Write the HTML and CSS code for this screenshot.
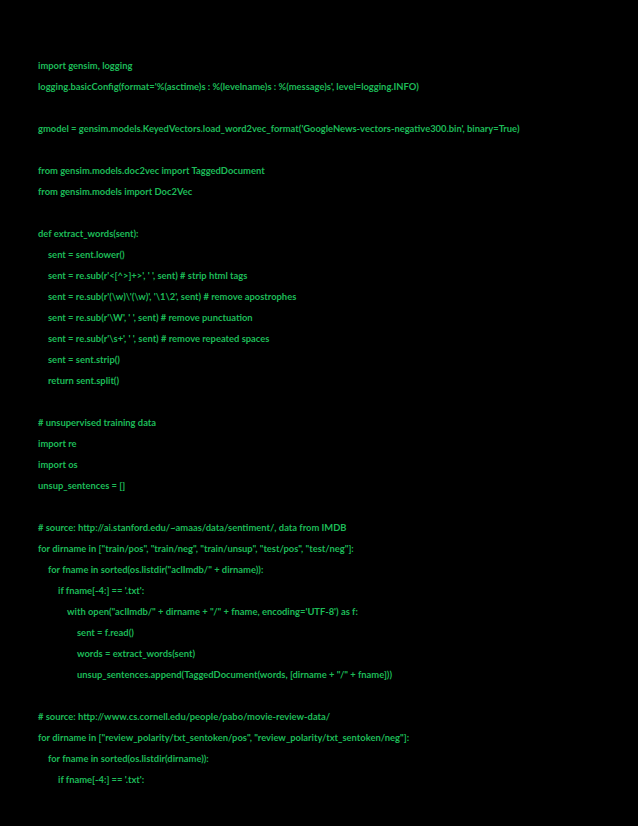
FILE: index.html
```html
<!DOCTYPE html>
<html>
<head>
<meta charset="utf-8">
<link rel="stylesheet" href="styles.css">
</head>
<body>
<div class="code">
<div class="ln">import gensim, logging</div>
<div class="ln">logging.basicConfig(format='%(asctime)s : %(levelname)s : %(message)s', level=logging.INFO)</div>
<div class="ln blank"></div>
<div class="ln">gmodel = gensim.models.KeyedVectors.load_word2vec_format('GoogleNews-vectors-negative300.bin', binary=True)</div>
<div class="ln blank"></div>
<div class="ln">from gensim.models.doc2vec import TaggedDocument</div>
<div class="ln">from gensim.models import Doc2Vec</div>
<div class="ln blank"></div>
<div class="ln">def extract_words(sent):</div>
<div class="ln i1">sent = sent.lower()</div>
<div class="ln i1">sent = re.sub(r'&lt;[^&gt;]+&gt;', ' ', sent) # strip html tags</div>
<div class="ln i1">sent = re.sub(r'(\w)\'(\w)', '\1\2', sent) # remove apostrophes</div>
<div class="ln i1">sent = re.sub(r'\W', ' ', sent) # remove punctuation</div>
<div class="ln i1">sent = re.sub(r'\s+', ' ', sent) # remove repeated spaces</div>
<div class="ln i1">sent = sent.strip()</div>
<div class="ln i1">return sent.split()</div>
<div class="ln blank"></div>
<div class="ln"># unsupervised training data</div>
<div class="ln">import re</div>
<div class="ln">import os</div>
<div class="ln">unsup_sentences = []</div>
<div class="ln blank"></div>
<div class="ln"># source: http://ai.stanford.edu/~amaas/data/sentiment/, data from IMDB</div>
<div class="ln">for dirname in ["train/pos", "train/neg", "train/unsup", "test/pos", "test/neg"]:</div>
<div class="ln i1">for fname in sorted(os.listdir("aclImdb/" + dirname)):</div>
<div class="ln i2">if fname[-4:] == '.txt':</div>
<div class="ln i3">with open("aclImdb/" + dirname + "/" + fname, encoding='UTF-8') as f:</div>
<div class="ln i4">sent = f.read()</div>
<div class="ln i4">words = extract_words(sent)</div>
<div class="ln i4">unsup_sentences.append(TaggedDocument(words, [dirname + "/" + fname]))</div>
<div class="ln blank"></div>
<div class="ln"># source: http://www.cs.cornell.edu/people/pabo/movie-review-data/</div>
<div class="ln">for dirname in ["review_polarity/txt_sentoken/pos", "review_polarity/txt_sentoken/neg"]:</div>
<div class="ln i1">for fname in sorted(os.listdir(dirname)):</div>
<div class="ln i2">if fname[-4:] == '.txt':</div>
</div>
</body>
</html>
```
FILE: styles.css
```css
html, body {
  margin: 0;
  padding: 0;
  background: #000;
}
body {
  width: 638px;
  height: 826px;
  overflow: hidden;
}
.code {
  padding: 55px 0 0 38px;
  font-family: "Lato", "Liberation Sans", sans-serif;
  font-weight: 700;
  font-size: 9.4px;
  line-height: 21px;
  color: #1dbb58;
}
.ln {
  height: 21px;
  white-space: pre;
}
.i1 { padding-left: 10px; }
.i2 { padding-left: 20px; }
.i3 { padding-left: 29px; }
.i4 { padding-left: 39px; }
```
